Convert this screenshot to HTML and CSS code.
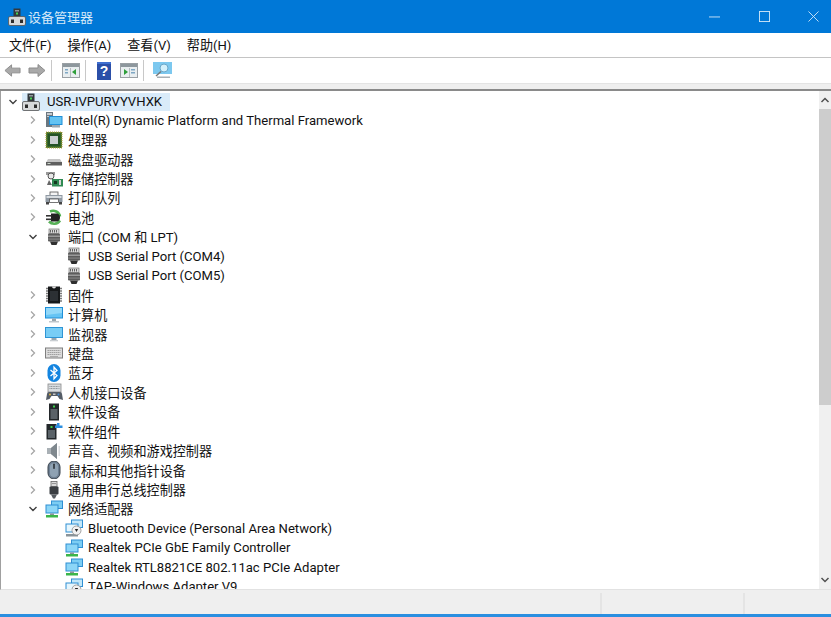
FILE: index.html
```html
<!DOCTYPE html>
<html lang="zh-CN">
<head>
<meta charset="utf-8">
<title>设备管理器</title>
<link rel="stylesheet" href="styles.css">
</head>
<body>
<svg class="defs" width="0" height="0" aria-hidden="true">
  <defs>
    <symbol id="i-pc" viewBox="0 0 18 18"><rect x="5.500" y="0.500" width="7" height="9" fill="#33383c"/><rect x="7" y="2" width="4" height="1.500" fill="#8f979c"/><rect x="8" y="4.500" width="2" height="2" fill="#46d050"/><rect x="0.500" y="8.500" width="17" height="9" rx="1.500" fill="#d8dadb" stroke="#555" stroke-width=".8"/><rect x="3" y="11.500" width="3" height="3.500" fill="#2c2c2c"/><rect x="12" y="11.500" width="3" height="3.500" fill="#2c2c2c"/></symbol>
    <symbol id="i-platform" viewBox="0 0 18 18"><rect x="1" y="1" width="7" height="15" fill="#6b7780"/><rect x="2" y="2" width="5" height="2" fill="#c5cbd0"/><rect x="2" y="5" width="5" height="1" fill="#c5cbd0"/><rect x="4" y="5" width="13.500" height="9" fill="#1f8fd8"/><rect x="5" y="6" width="11.500" height="7" fill="#63c3f2"/><rect x="7" y="14" width="8" height="2.500" fill="#9aa6ad"/></symbol>
    <symbol id="i-cpu" viewBox="0 0 18 18"><rect x="1" y="1" width="16" height="16" fill="#4e7d2e"/><rect x="1" y="1" width="16" height="16" fill="none" stroke="#b59a40" stroke-width="1" stroke-dasharray="1 1"/><rect x="2.500" y="2.500" width="13" height="13" fill="#245226"/><rect x="5" y="5" width="8" height="8" fill="#c9ced0"/></symbol>
    <symbol id="i-disk" viewBox="0 0 18 18"><path d="M3 9h12l2 3.500H1z" fill="#c4c4c4"/><rect x="1" y="12" width="16" height="3.500" fill="#5f5f5f"/><rect x="2.500" y="13" width="3" height="1" fill="#c9d4c9"/></symbol>
    <symbol id="i-storage" viewBox="0 0 18 18"><path d="M1 2h9v3H1z" fill="#9a9a9a"/><path d="M3 6a3 3 0 1 0 6 0 3 3 0 1 0-6 0" fill="#e8e8e8" stroke="#555" stroke-width="1"/><path d="M4 10l-2 5h5z" fill="#666"/><rect x="7" y="9" width="11" height="7.500" fill="#2f8a52"/><rect x="9" y="11" width="3" height="3" fill="#14381f"/><rect x="14" y="10" width="2" height="5" fill="#d5d5d5"/></symbol>
    <symbol id="i-print" viewBox="0 0 18 18"><rect x="5" y="3" width="8" height="4" fill="#f4f4f4" stroke="#555" stroke-width=".8"/><rect x="0.500" y="6" width="17" height="7" fill="#8f99a3"/><rect x="1.500" y="7" width="15" height="2" fill="#d7dce0"/><rect x="4.500" y="10" width="9" height="3.500" fill="#fff" stroke="#555" stroke-width=".8"/><rect x="1" y="13" width="3" height="2.500" fill="#444"/><rect x="14" y="13" width="3" height="2.500" fill="#444"/></symbol>
    <symbol id="i-battery" viewBox="0 0 18 18"><path d="M5 3.500a7 7 0 0 1 10 5" fill="none" stroke="#4fb04f" stroke-width="2.600"/><path d="M4 13.500a7 7 0 0 0 11-1" fill="none" stroke="#58b158" stroke-width="2.600"/><path d="M6 5.500h5a4 4 0 0 1 4 4v0a4 4 0 0 1-4 4H6z" fill="#222"/><rect x="1" y="7" width="5.500" height="1.600" fill="#333"/><rect x="1" y="10.500" width="5.500" height="1.600" fill="#333"/></symbol>
    <symbol id="i-port" viewBox="0 0 18 18"><rect x="4" y="1" width="10" height="4.500" fill="#d8d8d8" stroke="#777" stroke-width=".7"/><path d="M5.500 2v2.500M7.500 2v2.500M9.500 2v2.500M11.500 2v2.500" stroke="#444" stroke-width=".8"/><rect x="3" y="5.500" width="12" height="8" rx="1" fill="#5c5c5c"/><rect x="3" y="7.500" width="12" height="1.500" fill="#9a9a9a"/><rect x="3" y="10.500" width="12" height="1.200" fill="#808080"/><path d="M5 13.500h8l-1.500 3.500h-5z" fill="#303030"/></symbol>
    <symbol id="i-firmware" viewBox="0 0 18 18"><rect x="3" y="0.500" width="12" height="17" fill="#16181a"/><path d="M7 0.500a2 2 0 0 0 4 0z" fill="#e0e0e0"/><path d="M1 2.500h2M1 5h2M1 7.500h2M1 10h2M1 12.500h2M1 15h2M15 2.500h2M15 5h2M15 7.500h2M15 10h2M15 12.500h2M15 15h2" stroke="#7a7a7a" stroke-width="1.300"/><rect x="5" y="5" width="8" height="10" fill="#2c3034"/></symbol>
    <symbol id="i-computer" viewBox="0 0 18 18"><rect x="0" y="1" width="18" height="11.500" fill="#1f8fd8"/><rect x="1" y="2" width="16" height="9.500" fill="#66c4f4"/><path d="M1 2h16v5L1 9z" fill="#93d8f8"/><rect x="7" y="12.500" width="4" height="2.500" fill="#9aa6ad"/><rect x="4" y="15" width="10" height="1.500" fill="#c2c8cc"/></symbol>
    <symbol id="i-monitor" viewBox="0 0 18 18"><rect x="0" y="2" width="18" height="11" fill="#2f95d5"/><rect x="1" y="3" width="16" height="9" fill="#78cdf5"/><rect x="6.500" y="13" width="5" height="2" fill="#9aa6ad"/><rect x="5" y="15" width="8" height="1.300" fill="#c9ced2"/></symbol>
    <symbol id="i-keyboard" viewBox="0 0 18 18"><rect x="0.500" y="4" width="17" height="10" fill="#dcdcdc" stroke="#7f7f7f"/><path d="M2.500 6.500h13M2.500 8.500h13M2.500 10.500h13" stroke="#a0a0a0" stroke-width="1" stroke-dasharray="1.500 .5"/><rect x="5" y="12" width="8" height="1" fill="#aaa"/></symbol>
    <symbol id="i-bt" viewBox="0 0 18 18"><rect x="2.500" y="0" width="13" height="18" rx="6.500" fill="#1485e0"/><path d="M5.500 6l6.500 5.500L9 14.800V3.200l3 3.300L5.500 12" fill="none" stroke="#fff" stroke-width="1.300"/></symbol>
    <symbol id="i-hid" viewBox="0 0 18 18"><rect x="3" y="1" width="13" height="8" fill="#d9dde0" stroke="#888" stroke-width=".8"/><path d="M4.500 3.500h10M4.500 5.500h10" stroke="#8a9096" stroke-dasharray="1 .6"/><path d="M1 17l1-6a2 2 0 0 1 2-2h11a2 2 0 0 1 2 2l1 6-3.500-1-2-3H6.500l-2 3z" fill="#545c66"/><circle cx="5" cy="11.500" r="1" fill="#e1b23a"/><circle cx="13.500" cy="11.500" r="1" fill="#4a90d9"/><rect x="8" y="10.500" width="2.500" height="1.500" fill="#c8c8c8"/></symbol>
    <symbol id="i-softdev" viewBox="0 0 18 18"><rect x="4" y="0.500" width="10" height="17" fill="#23272a"/><rect x="5.500" y="6" width="7" height="10" fill="#5a6268"/><rect x="8" y="2.500" width="2" height="2" fill="#3bd24a"/></symbol>
    <symbol id="i-softcomp" viewBox="0 0 18 18"><rect x="1.500" y="2" width="10" height="15.500" fill="#23272a"/><rect x="3" y="8" width="7" height="8" fill="#5a6268"/><rect x="5.500" y="4" width="2" height="2" fill="#3bd24a"/><path d="M12 1h2.500v2.500H17.500V6H10V3.500h2z" fill="#2d8fe0"/></symbol>
    <symbol id="i-sound" viewBox="0 0 18 18"><path d="M2 6h4l6-5v16l-6-5H2z" fill="#a9b0b5"/><path d="M6 6l6-5v16l-6-5z" fill="#7f888e"/><rect x="13.500" y="4" width="1.500" height="10" fill="#d7dadd"/></symbol>
    <symbol id="i-mouse" viewBox="0 0 18 18"><rect x="3" y="0" width="12" height="18" rx="6" fill="#6d7f92" stroke="#39434d"/><rect x="5" y="2" width="8" height="14" rx="4" fill="#8fa2b3"/><rect x="8.200" y="2.500" width="1.600" height="5.500" rx=".8" fill="#2b3238"/></symbol>
    <symbol id="i-usb" viewBox="0 0 18 18"><rect x="6" y="0.500" width="6" height="5" fill="#dadada" stroke="#666" stroke-width=".8"/><rect x="7.500" y="2" width="1" height="1" fill="#555"/><rect x="9.500" y="2" width="1" height="1" fill="#555"/><rect x="4.500" y="5.500" width="9" height="8" rx="1" fill="#3a3e42"/><path d="M6 13.500h6L10 17.500H8z" fill="#565b60"/></symbol>
    <symbol id="i-net" viewBox="0 0 18 18"><rect x="6" y="0.500" width="12" height="8.500" fill="#2f8fd3"/><rect x="7" y="1.500" width="10" height="6.500" fill="#7ccdf3"/><rect x="0.500" y="4.500" width="13" height="9" fill="#2f8fd3"/><rect x="1.500" y="5.500" width="11" height="7" fill="#8cd6f7"/><rect x="5" y="13.500" width="4" height="1.500" fill="#8a949a"/><rect x="1" y="15" width="12" height="2.500" fill="#3bb54a"/></symbol>
    <symbol id="i-netdown" viewBox="0 0 18 18"><rect x="6" y="0.500" width="12" height="8.500" fill="#2f8fd3"/><rect x="7" y="1.500" width="10" height="6.500" fill="#c2e7f9"/><rect x="0.500" y="4.500" width="13" height="9" fill="#2f8fd3"/><rect x="1.500" y="5.500" width="11" height="7" fill="#e6f6fd"/><rect x="1" y="15" width="12" height="2.500" fill="#8a949a"/><circle cx="11.500" cy="11.500" r="4.500" fill="#f1f1f1" stroke="#8b8b8b" stroke-width=".8"/><path d="M9.800 10h3.400l-1.700 3z" fill="#222"/></symbol>
    <symbol id="i-chev-r" viewBox="0 0 8 10"><path d="M2 1.500L5.500 5 2 8.500" fill="none" stroke="#a6a6a6" stroke-width="1.300"/></symbol>
    <symbol id="i-chev-d" viewBox="0 0 10 8"><path d="M1.500 2L5 5.500 8.500 2" fill="none" stroke="#404040" stroke-width="1.400"/></symbol>
  </defs>
</svg>

<header class="titlebar">
  <svg class="title-icon"><use href="#i-pc"/></svg>
  <span class="title-text">设备管理器</span>
  <div class="win-buttons">
    <svg class="win-btn" viewBox="0 0 12 12"><path d="M0 6.500h12" stroke="#cfe6f8" stroke-width="1"/></svg>
    <svg class="win-btn" viewBox="0 0 12 12"><rect x=".5" y=".5" width="11" height="11" fill="none" stroke="#cfe6f8"/></svg>
    <svg class="win-btn" viewBox="0 0 12 12"><path d="M.5.500l11 11M11.500.500l-11 11" stroke="#cfe6f8"/></svg>
  </div>
</header>

<nav class="menubar">
  <span class="menu-item">文件(F)</span>
  <span class="menu-item">操作(A)</span>
  <span class="menu-item">查看(V)</span>
  <span class="menu-item">帮助(H)</span>
</nav>

<div class="toolbar">
  <svg class="tool tool-back" viewBox="0 0 18 14"><path d="M8 1L1 7l7 6V9.500h9v-5H8z" fill="#a9a9a9" stroke="#8c8c8c"/></svg>
  <svg class="tool tool-fwd" viewBox="0 0 18 14"><path d="M10 1l7 6-7 6V9.500H1v-5h9z" fill="#a9a9a9" stroke="#8c8c8c"/></svg>
  <span class="tool-sep"></span>
  <svg class="tool tool-a" viewBox="0 0 18 15"><rect x=".5" y=".5" width="17" height="14" fill="#e9eef0" stroke="#9aa0a4"/><rect x="1" y="1" width="16" height="3" fill="#8d979d"/><rect x="3" y="6" width="3" height="1.500" fill="#7fa7c4"/><rect x="3" y="9" width="3" height="1.500" fill="#7fa7c4"/><rect x="8" y="5" width="1" height="9" fill="#b5bcc0"/><path d="M14 6v6l-4-3z" fill="#2e9e3a"/></svg>
  <span class="tool-sep"></span>
  <svg class="tool tool-help" viewBox="0 0 14 18"><rect width="14" height="18" fill="#2b4fa8"/><rect x="0" y="0" width="14" height="2" fill="#3f6fd0"/><text x="7" y="14" class="help-mark">?</text></svg>
  <svg class="tool tool-b" viewBox="0 0 18 15"><rect x=".5" y=".5" width="17" height="14" fill="#e9eef0" stroke="#9aa0a4"/><rect x="1" y="1" width="16" height="3" fill="#8d979d"/><rect x="11" y="6" width="4" height="1.500" fill="#7fa7c4"/><rect x="11" y="9" width="4" height="1.500" fill="#7fa7c4"/><rect x="9" y="5" width="1" height="9" fill="#b5bcc0"/><path d="M4 6v6l4-3z" fill="#2e9e3a"/></svg>
  <span class="tool-sep"></span>
  <svg class="tool tool-scan" viewBox="0 0 19 17"><rect x="0" y="0" width="19" height="12" fill="#7cc8ef"/><circle cx="11" cy="6" r="4" fill="#d3f0fb" stroke="#6aa7c9"/><path d="M8 9.500L3 14" stroke="#777" stroke-width="1.500"/><rect x="4" y="14.500" width="13" height="1.500" fill="#a8b0b5"/></svg>
</div>

<div class="toolbar-strip"></div>

<main class="tree-pane">
  <div class="tree">
    <div class="row row-root"><svg class="chev-d"><use href="#i-chev-d"/></svg><div class="root-label"><svg class="ico"><use href="#i-pc"/></svg><span>USR-IVPURVYVHXK</span></div></div>
    <div class="row"><svg class="chev-r"><use href="#i-chev-r"/></svg><svg class="ico"><use href="#i-platform"/></svg><span>Intel(R) Dynamic Platform and Thermal Framework</span></div>
    <div class="row"><svg class="chev-r"><use href="#i-chev-r"/></svg><svg class="ico"><use href="#i-cpu"/></svg><span>处理器</span></div>
    <div class="row"><svg class="chev-r"><use href="#i-chev-r"/></svg><svg class="ico"><use href="#i-disk"/></svg><span>磁盘驱动器</span></div>
    <div class="row"><svg class="chev-r"><use href="#i-chev-r"/></svg><svg class="ico"><use href="#i-storage"/></svg><span>存储控制器</span></div>
    <div class="row"><svg class="chev-r"><use href="#i-chev-r"/></svg><svg class="ico"><use href="#i-print"/></svg><span>打印队列</span></div>
    <div class="row"><svg class="chev-r"><use href="#i-chev-r"/></svg><svg class="ico"><use href="#i-battery"/></svg><span>电池</span></div>
    <div class="row"><svg class="chev-d"><use href="#i-chev-d"/></svg><svg class="ico"><use href="#i-port"/></svg><span>端口 (COM 和 LPT)</span></div>
    <div class="row row-child"><svg class="ico"><use href="#i-port"/></svg><span>USB Serial Port (COM4)</span></div>
    <div class="row row-child"><svg class="ico"><use href="#i-port"/></svg><span>USB Serial Port (COM5)</span></div>
    <div class="row"><svg class="chev-r"><use href="#i-chev-r"/></svg><svg class="ico"><use href="#i-firmware"/></svg><span>固件</span></div>
    <div class="row"><svg class="chev-r"><use href="#i-chev-r"/></svg><svg class="ico"><use href="#i-computer"/></svg><span>计算机</span></div>
    <div class="row"><svg class="chev-r"><use href="#i-chev-r"/></svg><svg class="ico"><use href="#i-monitor"/></svg><span>监视器</span></div>
    <div class="row"><svg class="chev-r"><use href="#i-chev-r"/></svg><svg class="ico"><use href="#i-keyboard"/></svg><span>键盘</span></div>
    <div class="row"><svg class="chev-r"><use href="#i-chev-r"/></svg><svg class="ico"><use href="#i-bt"/></svg><span>蓝牙</span></div>
    <div class="row"><svg class="chev-r"><use href="#i-chev-r"/></svg><svg class="ico"><use href="#i-hid"/></svg><span>人机接口设备</span></div>
    <div class="row"><svg class="chev-r"><use href="#i-chev-r"/></svg><svg class="ico"><use href="#i-softdev"/></svg><span>软件设备</span></div>
    <div class="row"><svg class="chev-r"><use href="#i-chev-r"/></svg><svg class="ico"><use href="#i-softcomp"/></svg><span>软件组件</span></div>
    <div class="row"><svg class="chev-r"><use href="#i-chev-r"/></svg><svg class="ico"><use href="#i-sound"/></svg><span>声音、视频和游戏控制器</span></div>
    <div class="row"><svg class="chev-r"><use href="#i-chev-r"/></svg><svg class="ico"><use href="#i-mouse"/></svg><span>鼠标和其他指针设备</span></div>
    <div class="row"><svg class="chev-r"><use href="#i-chev-r"/></svg><svg class="ico"><use href="#i-usb"/></svg><span>通用串行总线控制器</span></div>
    <div class="row"><svg class="chev-d"><use href="#i-chev-d"/></svg><svg class="ico"><use href="#i-net"/></svg><span>网络适配器</span></div>
    <div class="row row-child"><svg class="ico"><use href="#i-netdown"/></svg><span>Bluetooth Device (Personal Area Network)</span></div>
    <div class="row row-child"><svg class="ico"><use href="#i-net"/></svg><span>Realtek PCIe GbE Family Controller</span></div>
    <div class="row row-child"><svg class="ico"><use href="#i-net"/></svg><span>Realtek RTL8821CE 802.11ac PCIe Adapter</span></div>
    <div class="row row-child"><svg class="ico"><use href="#i-netdown"/></svg><span>TAP-Windows Adapter V9</span></div>
  </div>
  <div class="scrollbar">
    <svg class="scroll-arrow" viewBox="0 0 12 18"><path d="M2.500 11L6 7.500 9.500 11" fill="none" stroke="#505050" stroke-width="1.500"/></svg>
    <div class="scroll-track"><div class="scroll-thumb"></div></div>
    <svg class="scroll-arrow" viewBox="0 0 12 18"><path d="M2.500 7L6 10.500 9.500 7" fill="none" stroke="#505050" stroke-width="1.500"/></svg>
  </div>
</main>

<footer class="statusbar">
  <div class="status-cell status-main"></div>
  <div class="status-cell status-mid"></div>
  <div class="status-cell status-end"></div>
</footer>
<div class="bottom-edge"></div>
</body>
</html>
```

FILE: styles.css
```css
* { box-sizing: border-box; }
html, body { margin: 0; padding: 0; }
body {
  width: 831px;
  height: 617px;
  overflow: hidden;
  display: flex;
  flex-direction: column;
  background: #fff;
  color: #111;
  font-family: Roboto, "Noto Sans CJK SC", sans-serif;
  font-size: 13.1px;
}
.defs { position: absolute; }

.titlebar {
  height: 33px;
  flex: none;
  display: flex;
  align-items: center;
  background: #0078d7;
  color: #d6e9f8;
  padding-left: 8px;
}
.title-icon { width: 18px; height: 18px; margin-right: 2px; }
.title-text { font-size: 13px; }
.win-buttons { margin-left: auto; display: flex; gap: 38.5px; padding-right: 12px; }
.win-btn { width: 11px; height: 11px; }

.menubar {
  height: 25px;
  flex: none;
  display: flex;
  align-items: center;
  gap: 16px;
  padding: 0 0 2px 9px;
  border-bottom: 1px solid #c4c4c4;
}
.menu-item { white-space: nowrap; }

.toolbar {
  height: 25px;
  flex: none;
  display: flex;
  align-items: center;
  padding-left: 4px;
}
.tool { width: 18px; height: 15px; flex: none; }
.tool-back { width: 17px; margin-right: 7px; }
.tool-fwd { margin-right: 5px; }
.tool-a { margin: 0 5px 0 10px; }
.tool-help { width: 14px; height: 18px; margin: 0 9px 0 11px; }
.tool-b { margin-right: 5px; }
.tool-scan { width: 19px; height: 17px; margin-left: 9px; }
.help-mark { font-size: 14px; font-weight: 700; fill: #fff; text-anchor: middle; font-family: "Liberation Sans", sans-serif; }
.tool-sep { width: 1px; height: 21px; background: #c8c8c8; flex: none; }

.toolbar-strip {
  height: 8px;
  flex: none;
  background: #efefef;
  border-top: 1px solid #e4e4e4;
  border-bottom: 2px solid #8a8a8a;
}

.tree-pane {
  height: 499px;
  flex: none;
  display: flex;
  border-left: 1px solid #a0a0a0;
  border-bottom: 1px solid #e2e2e2;
}
.tree { flex: 1; min-width: 0; overflow: hidden; }
.row {
  height: 19.45px;
  display: flex;
  align-items: center;
  white-space: nowrap;
  padding-left: 28px;
}
.row-root { padding-left: 7px; height: 19.5px; align-items: flex-end; }
.row-child { padding-left: 64px; }
.row .chev-r { width: 8px; height: 10px; margin-right: 8px; flex: none; }
.row .chev-d { width: 10px; height: 8px; margin-right: 7px; flex: none; margin-left: -1px; }
.row-root .chev-d { margin: 0 4px 5px 0; }
.ico { width: 18px; height: 18px; margin-right: 5px; flex: none; }
.root-label { display: flex; align-items: center; height: 18px; background: #d9ebf9; width: 148px; }
.root-label .ico { margin-right: 7px; }

.scrollbar { width: 12px; flex: none; display: flex; flex-direction: column; background: #f0f0f0; }
.scroll-arrow { width: 12px; height: 18px; flex: none; }
.scroll-track { flex: 1; }
.scroll-thumb { height: 296px; background: #cdcdcd; }

.statusbar {
  flex: 1;
  display: flex;
  background: #efefef;
  padding-top: 3px;
}
.status-cell { border-right: 2px solid #e4e4e4; }
.status-main { width: 602px; }
.status-mid { width: 143px; }
.status-end { flex: 1; border-right: 0; }
.bottom-edge { height: 3px; flex: none; background: #2a8fe0; }
```
